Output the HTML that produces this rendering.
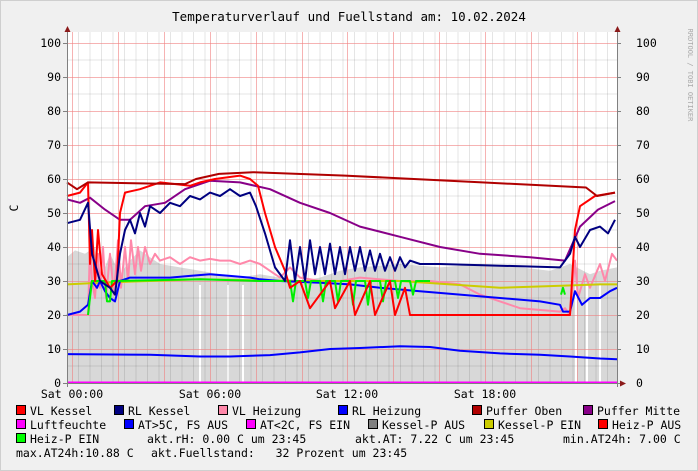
<!DOCTYPE html>
<html><head><meta charset="utf-8"><style>
html,body{margin:0;padding:0;background:#f0f0f0;}
svg{display:block;}
text{font-family:"DejaVu Sans Mono","Liberation Mono",monospace;font-size:11.5px;fill:#000;white-space:pre;}
</style></head><body>
<svg width="698" height="471" viewBox="0 0 698 471" xmlns="http://www.w3.org/2000/svg">
<rect x="0" y="0" width="698" height="471" fill="#f0f0f0"/>
<rect x="0.5" y="0.5" width="697" height="470" fill="none" stroke="#cfcfcf"/>
<rect x="67" y="32" width="550" height="351" fill="#fff"/>
<g transform="translate(0,383) scale(1,-3.4)">
<polygon fill="#d8d8d8" points="67,0 67,37 75,39 85,38 95,40 100,30 110,38 120,32 130,36 140,39 150,37 160,35 180,34 200,33 220,32 240,31 260,32 280,31 300,30 320,31 340,33 360,34 400,35 440,34 480,35 520,34 550,33 570,35 590,32 600,33 617,34 617,0"/>
</g>
<g stroke="#fff" stroke-width="2"><line x1="200" y1="285" x2="200" y2="383"/><line x1="228" y1="285" x2="228" y2="383"/><line x1="243" y1="285" x2="243" y2="383"/><line x1="576" y1="285" x2="576" y2="383"/><line x1="587" y1="285" x2="587" y2="383"/><line x1="600" y1="285" x2="600" y2="383"/></g>
<g stroke="#000" stroke-opacity="0.1" stroke-width="1">
<path d="M78.5 32V383M90 32V383M101.5 32V383M113 32V383M124.5 32V383M136 32V383M147.5 32V383M159 32V383M170.5 32V383M182 32V383M193.5 32V383M205 32V383M216.5 32V383M228 32V383M239.5 32V383M251 32V383M262.5 32V383M274 32V383M285.5 32V383M297 32V383M308.5 32V383M320 32V383M331.5 32V383M343 32V383M354.5 32V383M366 32V383M377.5 32V383M389 32V383M400.5 32V383M412 32V383M423.5 32V383M435 32V383M446.5 32V383M458 32V383M469.5 32V383M481 32V383M492.5 32V383M504 32V383M515.5 32V383M527 32V383M538.5 32V383M550 32V383M561.5 32V383M573 32V383M584.5 32V383M596 32V383M607.5 32V383"/>
<path d="M67 366H617M67 332H617M67 298H617M67 264H617M67 230H617M67 196H617M67 162H617M67 128H617M67 94H617M67 60H617"/>
</g>
<g stroke="#f08080" stroke-opacity="0.6" stroke-width="1">
<path d="M72.5 32V383M118.5 32V383M164.5 32V383M210.5 32V383M256.5 32V383M302.5 32V383M347.5 32V383M393.5 32V383M439.5 32V383M485.5 32V383M531.5 32V383M577.5 32V383"/>
<path d="M67 349.5H617M67 315.5H617M67 281.5H617M67 247.5H617M67 213.5H617M67 179.5H617M67 145.5H617M67 111.5H617M67 77.5H617M67 43.5H617"/>
</g>
<g transform="translate(0,383) scale(1,-3.4)" fill="none" stroke-linejoin="round">
<polyline vector-effect="non-scaling-stroke" stroke-width="2" stroke="#ff88aa" points="67,20 88,20 90,40 92,30 95,25 98,38 100,28 103,40 106,25 110,38 114,26 118,42 121,28 125,40 128,30 131,42 135,32 138,40 141,33 145,40 150,35 155,38 160,36 170,37 180,35 190,37 200,36 210,36.5 220,36 230,36 240,35 250,36 260,35 270,33 280,31 290,34 300,31 320,30 340,30 360,31 400,30 430,30 460,29 480,26 500,24 520,22 560,21 565,22 570,20 575,36 578,25 585,32 590,28 600,35 605,30 612,38 617,36"/>
<polyline vector-effect="non-scaling-stroke" stroke-width="2" stroke="#cccc00" points="67,29 100,29.5 200,30.5 300,30 400,30 450,29 500,28 550,28.5 600,29 617,29"/>
<polyline vector-effect="non-scaling-stroke" stroke-width="2" stroke="#0000ff" points="67,20 80,21 88,23 92,30 97,28 100,30 105,27 110,25 115,24 120,30 130,31 150,31 170,31 190,31.5 210,32 230,31.5 250,31 260,30.5 280,30 320,29.5 350,29 380,28 420,27 460,26 500,25 540,24 560,23 563,21 570,21 575,27 582,23 590,25 600,25 610,27 617,28"/>
<polyline vector-effect="non-scaling-stroke" stroke-width="2" stroke="#00ee00" points="88,20 92,30 105,30 107,24 110,24 112,30 200,30.5 260,30 290,30 293,24 296,30 305,30 308,25 311,30 320,30 323,24 326,30 335,30 338,24 341,30 350,30 353,23 356,30 365,30 368,23 371,30 380,30 383,24 386,30 395,30 398,25 401,30 410,30 413,26 416,30 430,30"/>
<polyline vector-effect="non-scaling-stroke" stroke-width="2" stroke="#00ee00" points="561,26 563,28 565,26"/>
<polyline vector-effect="non-scaling-stroke" stroke-width="2" stroke="#0000ff" points="67,8.5 150,8.3 200,7.8 230,7.8 270,8.2 300,9 330,10 360,10.3 400,10.8 430,10.6 460,9.5 500,8.7 540,8.3 570,7.8 600,7.2 617,7"/>
<polyline vector-effect="non-scaling-stroke" stroke-width="2" stroke="#880088" points="67,54 80,53 90,54.5 105,51 120,48 130,48 145,52 165,53 185,57 210,59.5 240,59 270,57 300,53 330,50 360,46 400,43 440,40 480,38 530,37 565,36 580,46 598,51 615,53.5"/>
<polyline vector-effect="non-scaling-stroke" stroke-width="2" stroke="#ff0000" points="67,55 80,56 88,59 90,35 92,45 95,30 98,45 102,32 110,28 117,30 120,50 125,56 140,57 160,59 190,58 200,59 215,60 240,61 250,60 258,58 265,50 275,40 285,33 290,28 300,30 310,22 330,30 335,22 350,30 355,20 370,30 375,20 390,30 395,20 405,28 410,20 430,20 560,20 570,20 575,45 580,52 595,55 615,56"/>
<polyline vector-effect="non-scaling-stroke" stroke-width="2" stroke="#000080" points="67,47 80,48 88,53 92,38 100,30 110,28 115,26 120,38 125,45 130,48 135,44 140,50 145,46 150,52 160,50 170,53 180,52 190,55 200,54 210,56 220,55 230,57 240,55 250,56 256,52 265,44 275,34 285,30 290,42 295,30 300,40 305,30 310,42 315,32 320,40 325,32 330,41 335,32 340,40 345,32 350,40 355,33 360,40 365,33 370,39 375,33 380,38 385,33 390,37 395,33 400,37 405,34 410,36 420,35 440,35 500,34.5 560,34 570,38 575,43 580,40 590,45 600,46 608,44 615,48"/>
<polyline vector-effect="non-scaling-stroke" stroke-width="2" stroke="#b00000" points="67,59 77,57 88,59 185,58.5 196,60 219,61.5 253,62 345,61 482,59 586,57.5 597,55 615,56"/>
</g>
<line x1="67" y1="382.5" x2="617" y2="382.5" stroke="#ff00ff" stroke-width="2"/>
<g stroke="#808080" stroke-width="1"><line x1="67.5" y1="30" x2="67.5" y2="387"/><line x1="617.5" y1="30" x2="617.5" y2="387"/><line x1="63" y1="383.5" x2="620" y2="383.5"/></g>
<g fill="#8b1a1a"><polygon points="64.5,32 70.5,32 67.5,26"/><polygon points="614.5,32 620.5,32 617.5,26"/><polygon points="620,380.5 620,386.5 626,383.5"/></g>
<g stroke="#808080"><path d="M63 43.5h4M63 77.5h4M63 111.5h4M63 145.5h4M63 179.5h4M63 213.5h4M63 247.5h4M63 281.5h4M63 315.5h4M63 349.5h4M617 43.5h4M617 77.5h4M617 111.5h4M617 145.5h4M617 179.5h4M617 213.5h4M617 247.5h4M617 281.5h4M617 315.5h4M617 349.5h4"/></g>
<text x="349" y="21" text-anchor="middle" style="font-size:12.5px">Temperaturverlauf und Fuellstand am: 10.02.2024</text>
<g text-anchor="end"><text x="61" y="47">100</text><text x="61" y="81">90</text><text x="61" y="115">80</text><text x="61" y="149">70</text><text x="61" y="183">60</text><text x="61" y="217">50</text><text x="61" y="251">40</text><text x="61" y="285">30</text><text x="61" y="319">20</text><text x="61" y="353">10</text><text x="61" y="387">0</text></g>
<g><text x="636" y="47">100</text><text x="636" y="81">90</text><text x="636" y="115">80</text><text x="636" y="149">70</text><text x="636" y="183">60</text><text x="636" y="217">50</text><text x="636" y="251">40</text><text x="636" y="285">30</text><text x="636" y="319">20</text><text x="636" y="353">10</text><text x="636" y="387">0</text></g>
<text x="18" y="208" transform="rotate(-90 18 208)" text-anchor="middle">C</text>
<text x="688" y="75" transform="rotate(90 688 75)" text-anchor="middle" style="font-size:7px;fill:#aaa">RRDTOOL / TOBI OETIKER</text>
<g text-anchor="middle"><text x="72" y="398">Sat 00:00</text><text x="210" y="398">Sat 06:00</text><text x="347" y="398">Sat 12:00</text><text x="485" y="398">Sat 18:00</text></g>
<g stroke="#000" stroke-width="1">
<rect x="16.5" y="405.5" width="9" height="9" fill="#ff0000"/><rect x="114.5" y="405.5" width="9" height="9" fill="#000080"/><rect x="218.5" y="405.5" width="9" height="9" fill="#ff88aa"/><rect x="338.5" y="405.5" width="9" height="9" fill="#0000ff"/><rect x="472.5" y="405.5" width="9" height="9" fill="#b00000"/><rect x="583.5" y="405.5" width="9" height="9" fill="#880088"/>
<rect x="16.5" y="419.5" width="9" height="9" fill="#ff00ff"/><rect x="124.5" y="419.5" width="9" height="9" fill="#0000ff"/><rect x="246.5" y="419.5" width="9" height="9" fill="#ff00ff"/><rect x="368.5" y="419.5" width="9" height="9" fill="#808080"/><rect x="484.5" y="419.5" width="9" height="9" fill="#cccc00"/><rect x="598.5" y="419.5" width="9" height="9" fill="#ff0000"/>
<rect x="16.5" y="433.5" width="9" height="9" fill="#00ff00"/>
</g>
<g>
<text x="30" y="415">VL Kessel</text><text x="128" y="415">RL Kessel</text><text x="232" y="415">VL Heizung</text><text x="352" y="415">RL Heizung</text><text x="486" y="415">Puffer Oben</text><text x="597" y="415">Puffer Mitte</text>
<text x="30" y="429">Luftfeuchte</text><text x="138" y="429">AT&gt;5C, FS AUS</text><text x="260" y="429">AT&lt;2C, FS EIN</text><text x="382" y="429">Kessel-P AUS</text><text x="498" y="429">Kessel-P EIN</text><text x="612" y="429">Heiz-P AUS</text>
<text x="30" y="443">Heiz-P EIN</text><text x="147" y="443">akt.rH: 0.00 C um 23:45</text><text x="355" y="443">akt.AT: 7.22 C um 23:45</text><text x="563" y="443">min.AT24h: 7.00 C</text>
<text x="16" y="457">max.AT24h:10.88 C</text><text x="151" y="457">akt.Fuellstand:   32 Prozent um 23:45</text>
</g>
</svg>
</body></html>
